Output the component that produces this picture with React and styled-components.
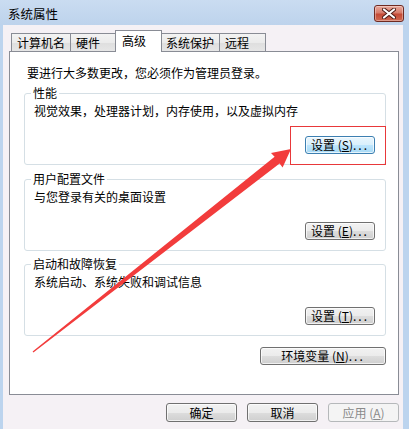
import styled, { createGlobalStyle } from 'styled-components';

const Global = createGlobalStyle`
  html, body { margin: 0; padding: 0; background: #f5f1f5; }
  body {
    font-family: "Noto Sans CJK SC", "Noto Sans", sans-serif;
    font-size: 12px; color: #000;
  }
  * { box-sizing: border-box; }
`;

const Win = styled.div`
  position: relative; width: 409px; height: 429px; overflow: hidden;
  display: flex; flex-direction: column; background: #bcd4ee;
`;
const TitleBar = styled.div`
  height: 25px; flex: none; display: flex; align-items: center; justify-content: space-between;
  padding: 2px 5px 0 8px;
  background: linear-gradient(#cadcf1, #bdd3ec);
  font-size: 12.5px;
`;
const CloseBtn = styled.div`
  width: 30px; height: 17px; border-radius: 3px; border: 1px solid #6f2a22;
  display: flex; align-items: center; justify-content: center;
  background: linear-gradient(#e9a99c 0%, #d77d6c 45%, #c44a36 55%, #d06a52 100%);
  box-shadow: inset 0 0 0 1px rgba(255,255,255,0.35);
`;
const Client = styled.div`
  flex: 1; margin: 0 6px 0 3px; background: #f5f1f5;
  padding: 5px 4px 0 6px; display: flex; flex-direction: column;
`;
const TabStrip = styled.div`
  display: flex; align-items: flex-end; height: 21px; padding-left: 2px;
  position: relative; z-index: 1;
`;
const Tab = styled.div`
  width: ${p => p.$w}px; height: ${p => (p.$active ? 22 : 18)}px;
  margin: ${p => (p.$active ? '0 -2px -1px' : '0')};
  padding: ${p => (p.$active ? '2px 0 0 6px' : '1px 0 0 5px')};
  border: 1px solid #898c95; border-bottom: ${p => (p.$active ? 'none' : '0')};
  border-left-width: ${p => (p.$first || p.$active ? 1 : 0)}px;
  background: ${p => (p.$active ? '#fff' : 'linear-gradient(#f3f3f3 0%, #ebebeb 50%, #dedede 51%, #e6e6e6 100%)')};
  line-height: 15px; white-space: nowrap;
  position: relative; z-index: ${p => (p.$active ? 2 : 1)};
`;
const Panel = styled.div`
  height: 344px; border: 1px solid #898c95; background: #fff;
  padding: 14px 12px 0 14px; display: flex; flex-direction: column;
`;
const Intro = styled.div`
  line-height: 14px; margin-left: 3px; white-space: nowrap;
`;
const Group = styled.fieldset`
  margin: ${p => p.$top}px 0 0; padding: 4px 10px 10px 9px;
  border: 1px solid #d5dfe5; border-radius: 3px; min-width: 0;
`;
const Legend = styled.legend`
  padding: 0 2px; margin-left: -3px; line-height: 14px; font-size: 12px;
`;
const Desc = styled.div`line-height: 14px; white-space: nowrap;`;
const BtnRow = styled.div`
  display: flex; justify-content: flex-end; gap: 10px; margin-top: ${p => p.$top}px;
`;
const Btn = styled.button`
  width: ${p => p.$w}px; height: ${p => p.$h || 18}px; padding: 0;
  font-family: inherit; font-size: 12px; line-height: 14px; color: ${p => (p.disabled ? '#8a8a8a' : '#000')};
  border-radius: 3px;
  border: 1px solid ${p => (p.$focus ? '#3c7fb1' : p.disabled ? '#b5b8ba' : '#707070')};
  background: ${p =>
    p.$focus
      ? 'linear-gradient(#eaf6fd 0%, #d9f0fc 50%, #bee6fd 51%, #a7d9f5 100%)'
      : p.disabled
        ? '#f4f4f4'
        : 'linear-gradient(#f2f2f2 0%, #ebebeb 50%, #dddddd 51%, #cfcfcf 100%)'};
  box-shadow: inset 0 0 0 1px ${p => (p.disabled ? 'transparent' : 'rgba(255,255,255,0.7)')};
  white-space: nowrap;
  u { text-decoration: underline; }
  .dots { letter-spacing: 2px; }
`;
const Overlay = styled.svg`
  position: absolute; left: 0; top: 0; pointer-events: none;
`;

const Settings = ({ k, focus }) => (
  <Btn $w={70} $focus={focus}>
    设置 (<u>{k}</u>)<span className="dots">...</span>
  </Btn>
);

const groups = [
  { title: '性能', desc: '视觉效果，处理器计划，内存使用，以及虚拟内存', k: 'S', focus: true, top: 6 },
  { title: '用户配置文件', desc: '与您登录有关的桌面设置', k: 'E', top: 7 },
  { title: '启动和故障恢复', desc: '系统启动、系统失败和调试信息', k: 'T', top: 6 },
];

const tabs = [
  { name: '计算机名', w: 60 },
  { name: '硬件', w: 46 },
  { name: '高级', w: 47, active: true },
  { name: '系统保护', w: 60 },
  { name: '远程', w: 46 },
];

export default function App() {
  return (
    <>
      <Global />
      <Win>
        <TitleBar>
          <span>系统属性</span>
          <CloseBtn>
            <svg width="14" height="11" viewBox="0 0 14 11">
              <path d="M2 1.5 L12 9.5 M12 1.5 L2 9.5" stroke="#4a1a14" strokeWidth="4" strokeLinecap="round" />
              <path d="M2 1.5 L12 9.5 M12 1.5 L2 9.5" stroke="#fff" strokeWidth="2.2" strokeLinecap="round" />
            </svg>
          </CloseBtn>
        </TitleBar>
        <Client>
          <TabStrip>
            {tabs.map((t, i) => (
              <Tab key={t.name} $w={t.w} $active={t.active} $first={i === 0 || tabs[i - 1].active}>
                {t.name}
              </Tab>
            ))}
          </TabStrip>
          <Panel>
            <Intro>要进行大多数更改，您必须作为管理员登录。</Intro>
            {groups.map(g => (
              <Group key={g.title} $top={g.top}>
                <Legend>{g.title}</Legend>
                <Desc>{g.desc}</Desc>
                <BtnRow $top={18}>
                  <Settings k={g.k} focus={g.focus} />
                </BtnRow>
              </Group>
            ))}
            <BtnRow $top={11}>
              <Btn $w={126}>
                环境变量 (<u>N</u>)<span className="dots">...</span>
              </Btn>
            </BtnRow>
          </Panel>
          <BtnRow $top={8}>
            <Btn $w={71} $h={19}>确定</Btn>
            <Btn $w={71} $h={19}>取消</Btn>
            <Btn $w={71} $h={19} disabled>应用 (<u>A</u>)</Btn>
          </BtnRow>
        </Client>
        <Overlay width="409" height="429" viewBox="0 0 409 429">
          <rect x="290.5" y="126.5" width="95" height="38" fill="none" stroke="#e8383a" strokeWidth="1" />
          <polygon
            points="33.4,352.5 279.6,163.6 282.6,167.4 291,149 271,153 274.6,156.8 32.6,351.5"
            fill="#f23c3c"
          />
        </Overlay>
      </Win>
    </>
  );
}
